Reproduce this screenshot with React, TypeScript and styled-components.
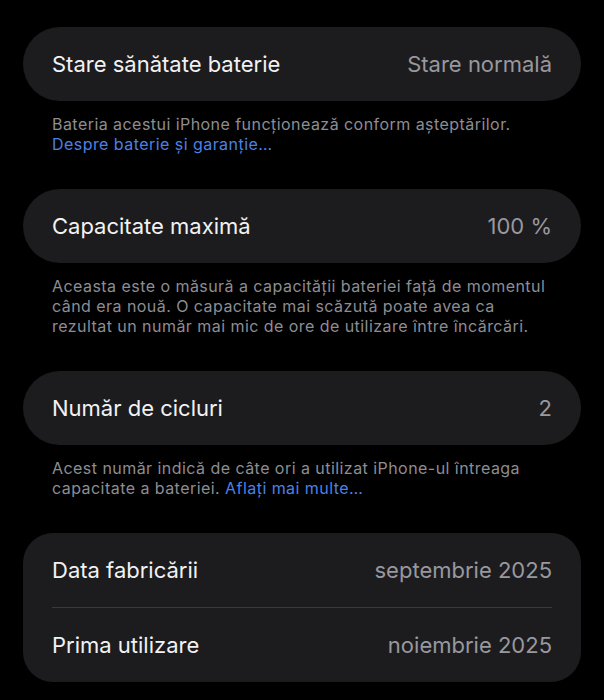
import { FC, ReactNode } from "react";
import styled, { createGlobalStyle } from "styled-components";

const GlobalStyle = createGlobalStyle`
  html, body {
    margin: 0;
    padding: 0;
    background: #000;
  }
  body {
    font-family: Inter, "Noto Sans", "Liberation Sans", sans-serif;
    font-weight: 400;
    -webkit-font-smoothing: antialiased;
  }
`;

const Page = styled.div`
  display: flex;
  flex-direction: column;
  gap: 35px;
  padding: 27px 23px 0;
  width: 604px;
  box-sizing: border-box;
`;

const Section = styled.div`
  display: flex;
  flex-direction: column;
`;

const Card = styled.div<{ $pill: boolean }>`
  background: #1c1c1e;
  border-radius: ${(p) => (p.$pill ? "37px" : "30px")};
  padding: 0 29px;
`;

const Row = styled.div<{ $divider: boolean }>`
  display: flex;
  align-items: center;
  justify-content: space-between;
  height: 74px;
  border-top: ${(p) => (p.$divider ? "1px solid #3a3a3c" : "none")};
`;

const Label = styled.span`
  color: #f2f2f4;
  font-size: 22px;
`;

const Value = styled.span`
  color: #98989e;
  font-size: 22px;
`;

const Footer = styled.p`
  margin: 13px 0 0;
  padding: 0 29px;
  color: #8d8d93;
  font-size: 16px;
  line-height: 20px;
  letter-spacing: 0.45px;
`;

const Link = styled.span`
  color: #4d80e6;
`;

interface TRow {
  label: string;
  value: string;
}

interface TSection {
  rows: TRow[];
  footer?: ReactNode;
}

const sections: TSection[] = [
  {
    rows: [{ label: "Stare sănătate baterie", value: "Stare normală" }],
    footer: (
      <>
        Bateria acestui iPhone funcționează conform așteptărilor.
        <br />
        <Link>Despre baterie și garanție…</Link>
      </>
    ),
  },
  {
    rows: [{ label: "Capacitate maximă", value: "100 %" }],
    footer: (
      <>
        Aceasta este o măsură a capacității bateriei față de momentul
        <br />
        când era nouă. O capacitate mai scăzută poate avea ca
        <br />
        rezultat un număr mai mic de ore de utilizare între încărcări.
      </>
    ),
  },
  {
    rows: [{ label: "Număr de cicluri", value: "2" }],
    footer: (
      <>
        Acest număr indică de câte ori a utilizat iPhone-ul întreaga
        <br />
        capacitate a bateriei. <Link>Aflați mai multe…</Link>
      </>
    ),
  },
  {
    rows: [
      { label: "Data fabricării", value: "septembrie 2025" },
      { label: "Prima utilizare", value: "noiembrie 2025" },
    ],
  },
];

const SettingsSection: FC<TSection> = ({ rows, footer }) => (
  <Section>
    <Card $pill={rows.length === 1}>
      {rows.map((row, i) => (
        <Row key={row.label} $divider={i > 0}>
          <Label>{row.label}</Label>
          <Value>{row.value}</Value>
        </Row>
      ))}
    </Card>
    {footer && <Footer>{footer}</Footer>}
  </Section>
);

const App = () => (
  <>
    <GlobalStyle />
    <Page>
      {sections.map((s, i) => (
        <SettingsSection key={i} {...s} />
      ))}
    </Page>
  </>
);

export default App;
